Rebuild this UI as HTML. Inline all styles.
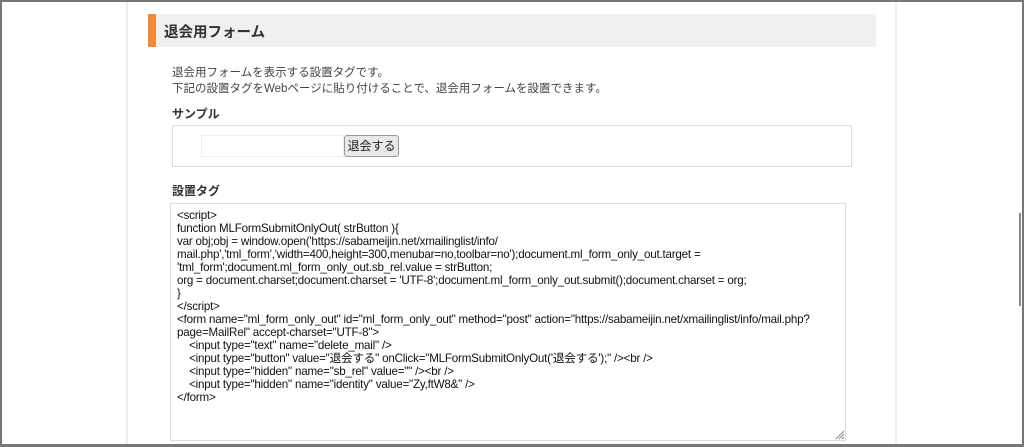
<!DOCTYPE html>
<html><head><meta charset="utf-8"><style>
*{margin:0;padding:0;box-sizing:border-box}
body{width:1024px;height:447px;overflow:hidden;background:#fff;font-family:"Liberation Sans","Noto Sans CJK JP",sans-serif;color:#333;position:relative}
.frame{position:absolute;left:0;top:0;width:1024px;height:447px;border:2px solid #777;border-bottom-width:3px}
.pl{position:absolute;top:0;bottom:0;width:2px;background:#eee}
.head{position:absolute;left:148px;top:14px;width:728px;height:33px;background:#f0f0f0;border-left:8px solid #f5873a}
.head span{position:absolute;left:8px;top:7px;font-size:14.5px;font-weight:bold;color:#333}
.p{position:absolute;left:172px;font-size:11.5px;color:#444}
.h3{position:absolute;left:172px;font-size:12px;font-weight:bold;color:#333}
.sample{position:absolute;left:172px;top:125px;width:680px;height:42px;border:1px solid #ddd}
.inp{position:absolute;left:201px;top:135px;width:143px;height:22px;border:1px solid #eee}
.btn{position:absolute;left:344px;top:135px;width:55px;height:22px;border:1px solid #999;border-radius:3px;background:#e8e8e8;font-size:12px;text-align:center;line-height:20px;color:#222}
.ta{position:absolute;left:170px;top:203px;width:676px;height:238px;border:1px solid #ddd;padding:5px 6px;font-size:11.6px;line-height:13px;color:#111;white-space:pre-wrap;letter-spacing:-0.2px;overflow:hidden}
.thumb{position:absolute;left:1019px;top:213px;width:2px;height:93px;background:#888}
</style></head><body>
<div class="pl" style="left:126px"></div><div class="pl" style="left:895px"></div>
<div class="head"><span>退会用フォーム</span></div>
<div class="p" style="top:64px">退会用フォームを表示する設置タグです。</div>
<div class="p" style="top:80px">下記の設置タグをWebページに貼り付けることで、退会用フォームを設置できます。</div>
<div class="h3" style="top:105px">サンプル</div>
<div class="sample"></div>
<div class="inp"></div>
<div class="btn">退会する</div>
<div class="h3" style="top:182px">設置タグ</div>
<div class="ta">&lt;script&gt;
function MLFormSubmitOnlyOut( strButton ){
var obj;obj = window.open('https://sabameijin.net/xmailinglist/info/
mail.php','tml_form','width=400,height=300,menubar=no,toolbar=no');document.ml_form_only_out.target =
'tml_form';document.ml_form_only_out.sb_rel.value = strButton;
org = document.charset;document.charset = 'UTF-8';document.ml_form_only_out.submit();document.charset = org;
}
&lt;/script&gt;
&lt;form name="ml_form_only_out" id="ml_form_only_out" method="post" action="https://sabameijin.net/xmailinglist/info/mail.php?
page=MailRel" accept-charset="UTF-8"&gt;
    &lt;input type="text" name="delete_mail" /&gt;
    &lt;input type="button" value="退会する" onClick="MLFormSubmitOnlyOut('退会する');" /&gt;&lt;br /&gt;
    &lt;input type="hidden" name="sb_rel" value="" /&gt;&lt;br /&gt;
    &lt;input type="hidden" name="identity" value="Zy,ftW8&amp;" /&gt;
&lt;/form&gt;</div>
<svg style="position:absolute;left:834px;top:429px" width="11" height="11"><path d="M10 2L2 10M10 5L5 10M10 8L8 10" stroke="#888" stroke-width="1"/></svg>
<div class="thumb"></div>
<div class="frame"></div>
</body></html>
